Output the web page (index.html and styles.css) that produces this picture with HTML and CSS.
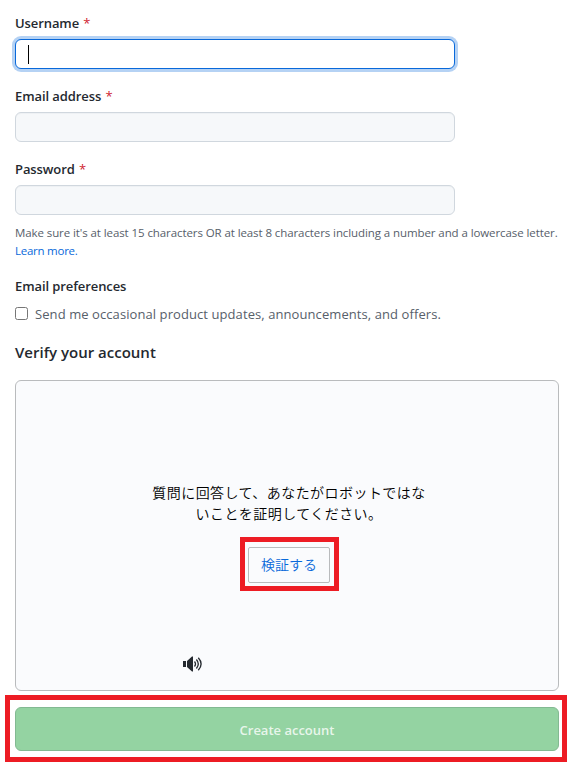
FILE: index.html
```html
<!DOCTYPE html>
<html lang="en">
<head>
<meta charset="utf-8">
<title>Create account</title>
<link rel="stylesheet" href="styles.css">
</head>
<body>
<form class="signup">
  <div class="field">
    <label class="label" for="username">Username <span class="required">*</span></label>
    <div class="input input-focused" id="username"><span class="caret"></span></div>
  </div>
  <div class="field">
    <label class="label" for="email">Email address <span class="required">*</span></label>
    <div class="input" id="email"></div>
  </div>
  <div class="field">
    <label class="label" for="password">Password <span class="required">*</span></label>
    <div class="input" id="password"></div>
  </div>
  <p class="note"><span class="note-text">Make sure it's at least 15 characters OR at least 8 characters including a number and a lowercase letter.</span><br><a class="link">Learn more.</a></p>
  <h3 class="label preferences">Email preferences</h3>
  <label class="check-row"><span class="checkbox"></span><span class="check-text">Send me occasional product updates, announcements, and offers.</span></label>
  <h2 class="verify-title">Verify your account</h2>
  <section class="captcha">
    <p class="question" lang="ja">質問に回答して、あなたがロボットではな<br>いことを証明してください。</p>
    <div class="verify-frame"><button class="verify-button" type="button" lang="ja">検証する</button></div>
    <svg class="audio" width="20" height="16" viewBox="0 0 20 16">
      <path d="M0 5h3v6H0zM4 5l5-4.6h1v15.2H9L4 11z" fill="#24292f"/>
      <path d="M11.5 5.5q2 2.5 0 5M13.4 3.5q3.8 4.5 0 9M15.3 1.8q5.6 6.2 0 12.4" fill="none" stroke="#24292f" stroke-width="1.3"/>
    </svg>
  </section>
  <div class="submit-frame"><button class="submit" type="button"><span>Create account</span></button></div>
</form>
</body>
</html>
```
FILE: styles.css
```css
* { box-sizing: border-box; }
body {
  margin: 0;
  background: #fff;
  color: #24292f;
  font-family: "Open Sans", "Noto Sans CJK JP", sans-serif;
}
.signup { width: 559px; padding: 12px 0 0 15px; }
.field { height: 73px; }
.label {
  display: block;
  height: 27px;
  margin: 0;
  font-size: 13px;
  font-weight: 600;
  letter-spacing: -.09px;
  line-height: 22px;
  white-space: nowrap;
}
.required { margin-left: 1px; color: #cf222e; font-weight: 400; }
.input {
  display: flex;
  align-items: center;
  width: 440px;
  height: 30px;
  padding-left: 12px;
  border: 1px solid #d0d7de;
  border-radius: 6px;
  background: #f6f8fa;
  box-shadow: inset 0 1px 0 rgba(208, 215, 222, .2);
}
.input-focused {
  border-color: #0969da;
  background: #fff;
  box-shadow: 0 0 0 3px rgba(9, 105, 218, .3);
}
.caret { width: 1px; height: 19px; background: #000; }
.note {
  height: 36px;
  margin: -7px 0 0;
  color: #57606a;
  font-size: 11.5px;
  letter-spacing: -.09px;
  line-height: 18px;
  white-space: nowrap;
}
.link { color: #0969da; letter-spacing: -.25px; }
.preferences { height: 30px; margin-top: 15px; }
.check-row {
  display: flex;
  align-items: center;
  height: 20px;
  margin-top: -2px;
  color: #57606a;
  font-size: 13px;
  letter-spacing: .08px;
  line-height: 20px;
  white-space: nowrap;
}
.check-text { position: relative; top: 1px; }
.checkbox {
  width: 13px;
  height: 13px;
  margin-right: 7px;
  border: 1px solid #767676;
  border-radius: 2.5px;
  background: #fff;
}
.verify-title {
  height: 24px;
  margin: 17px 0 16px;
  font-size: 15px;
  font-weight: 600;
  line-height: 24px;
  white-space: nowrap;
}
.captcha {
  display: flex;
  flex-direction: column;
  align-items: center;
  width: 544px;
  height: 311px;
  padding-top: 101px;
  border: 1px solid #b9bbbd;
  border-radius: 6px;
  background: #fafbfd;
}
.question {
  margin: 0 0 13px 4px;
  color: #000;
  font-family: "Noto Sans CJK JP", sans-serif;
  font-size: 14px;
  font-weight: 350;
  letter-spacing: .45px;
  line-height: 21px;
  text-align: center;
}
.verify-frame {
  width: 99px;
  height: 54px;
  margin-left: 5px;
  padding: 5px 0 0 3px;
  border: 5px solid #ed1c24;
}
.verify-button {
  width: 82px;
  height: 36px;
  padding: 0 0 2px;
  border: 1px solid #b9bbbd;
  border-radius: 2px;
  background: #fafbfd;
  color: #0969da;
  font: 350 14px/32px "Noto Sans CJK JP", sans-serif;
}
.audio { align-self: flex-start; margin: 65px 0 0 167px; }
.submit-frame {
  width: 562px;
  height: 67px;
  margin: 4px 0 0 -10px;
  padding: 7px 0 0 5px;
  border: 5px solid #ed1c24;
}
.submit {
  display: block;
  width: 544px;
  height: 44px;
  padding: 2px 0 0;
  border: 1px solid #83b992;
  border-radius: 6px;
  background: #94d3a2;
  color: rgba(255, 255, 255, .8);
  font: 600 13px/40px "Open Sans", sans-serif;
}
```
